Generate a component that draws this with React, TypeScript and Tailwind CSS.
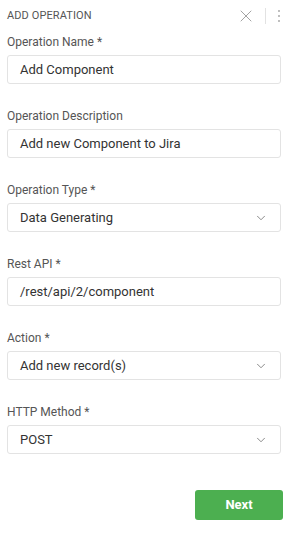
import { X, ChevronDown } from "lucide-react";

type Field = { label: string; value: string; select?: boolean };

const fields: Field[] = [
  { label: "Operation Name *", value: "Add Component" },
  { label: "Operation Description", value: "Add new Component to Jira" },
  { label: "Operation Type *", value: "Data Generating", select: true },
  { label: "Rest API *", value: "/rest/api/2/component" },
  { label: "Action *", value: "Add new record(s)", select: true },
  { label: "HTTP Method *", value: "POST", select: true },
];

export default function App() {
  return (
    <div className="w-[295px] h-[541px] bg-white font-['Roboto',sans-serif] text-[#333]">
      {/* Header */}
      <div className="flex items-center h-[32px] pl-[7px] pr-[15px]">
        <span className="text-[11px] text-[#555] tracking-[0.1px] flex-1">ADD OPERATION</span>
        <X className="w-[20px] h-[20px] text-[#9a9a9a]" strokeWidth={1.1} />
        <div className="w-px h-[16px] bg-[#e2e2e2] ml-[9px] mr-[12px]" />
        <div className="flex flex-col gap-[3px]">
          <span className="w-[2px] h-[2px] rounded-full bg-[#aaa]" />
          <span className="w-[2px] h-[2px] rounded-full bg-[#aaa]" />
          <span className="w-[2px] h-[2px] rounded-full bg-[#aaa]" />
        </div>
      </div>

      {/* Fields */}
      <div className="flex flex-col gap-[24px] px-[7px] pt-[2px]">
        {fields.map((f) => (
          <div key={f.label} className="flex flex-col">
            <label className="text-[12px] leading-[16px] text-[#555] mb-[5px]">{f.label}</label>
            <div className="flex items-center h-[29px] w-[274px] border border-[#e3e3e3] rounded-[3px] pl-[12px] pr-[12px]">
              <span className="flex-1 text-[13px] text-[#333]">{f.value}</span>
              {f.select && <ChevronDown className="w-[14px] h-[14px] text-[#666]" strokeWidth={1.3} />}
            </div>
          </div>
        ))}
      </div>

      {/* Footer */}
      <div className="flex justify-end pr-[12px] mt-[36px]">
        <button className="w-[88px] h-[30px] rounded-[3px] bg-[#4caf50] text-white text-[13px] font-bold">
          Next
        </button>
      </div>
    </div>
  );
}
